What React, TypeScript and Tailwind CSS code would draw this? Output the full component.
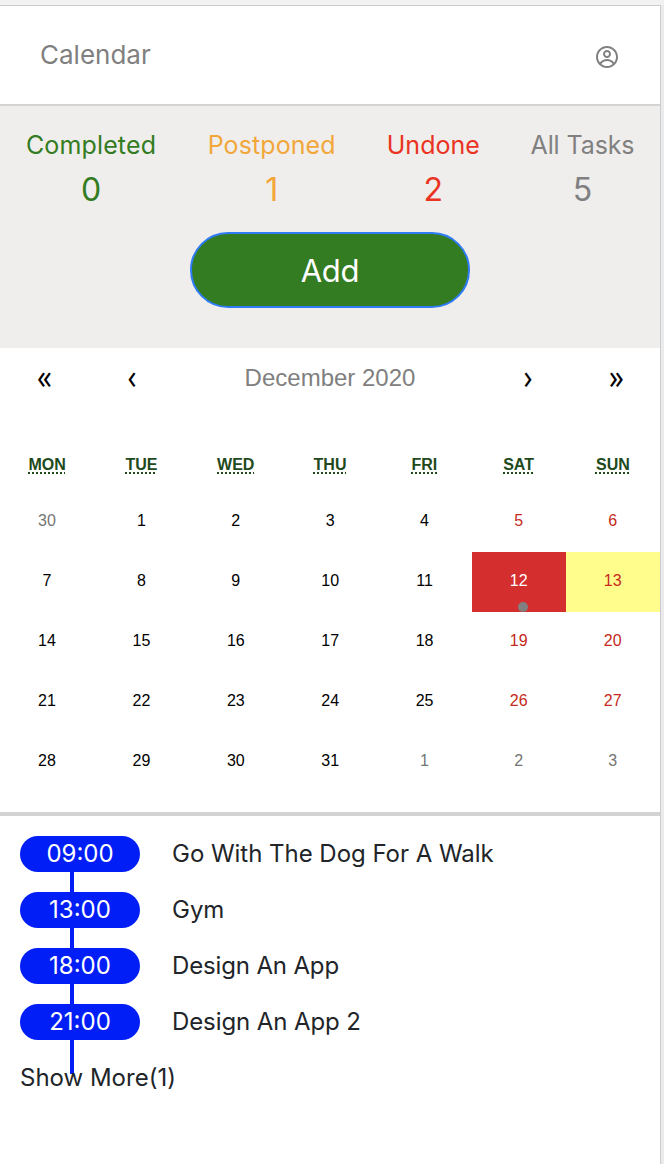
import { CgProfile } from "react-icons/cg";

const stats = [
  { label: "Completed", value: 0, color: "text-[#347c22]", box: "w-[130px]", track: "tracking-[0.15px]" },
  { label: "Postponed", value: 1, color: "text-[#f2a73b]", box: "w-[128px]", track: "tracking-[0.1px]" },
  { label: "Undone", value: 2, color: "text-[#ea3323]", box: "w-[92px]", track: "tracking-[0.05px]" },
  { label: "All Tasks", value: 5, color: "text-[#808080]", box: "w-[103px]", track: "tracking-[-0.1px]" },
];

const weekdays = ["MON", "TUE", "WED", "THU", "FRI", "SAT", "SUN"];

const days = [30, ...Array.from({ length: 31 }, (_, i) => i + 1), 1, 2, 3];

const tasks = [
  { time: "09:00", title: "Go With The Dog For A Walk", track: "tracking-[-0.03px]" },
  { time: "13:00", title: "Gym", track: "tracking-[-0.03px]" },
  { time: "18:00", title: "Design An App", track: "tracking-[-0.15px]" },
  { time: "21:00", title: "Design An App 2", track: "tracking-[-0.1px]" },
];

function dayClass(index: number) {
  if (index === 12) return "bg-[#d52e2e] text-white";
  if (index === 13) return "bg-[#fffd8c] text-[#c52a20]";
  if (index === 0 || index > 31) return "text-[#757575]";
  if (index % 7 >= 5) return "text-[#c52a20]";
  return "text-black";
}

function Header() {
  return (
    <header className="flex h-[100px] items-center justify-between border-b-2 border-[#d3d3d3] pr-[41px] pl-10">
      <h1 className="mb-0.5 text-[26px] leading-[39px] font-normal text-[#808080]">Calendar</h1>
      <CgProfile className="mt-[3px] size-6 text-[#808080]" />
    </header>
  );
}

function Summary() {
  return (
    <section className="h-[242px] bg-[#efeeec] pt-5">
      <div className="flex justify-between px-[26px]">
        {stats.map((s) => (
          <div key={s.label} className={`flex flex-col items-center whitespace-nowrap ${s.color} ${s.box}`}>
            <span className={`text-[25px] leading-[39px] ${s.track}`}>{s.label}</span>
            <span className="text-[32px] leading-[50px]">{s.value}</span>
          </div>
        ))}
      </div>
      <button className="mx-auto mt-[17px] flex h-[76px] w-[280px] items-center justify-center rounded-full border-2 border-[#2f7cf6] bg-[#347c22] pt-0.5 text-[31px] tracking-[-0.3px] text-white">
        Add
      </button>
    </section>
  );
}

function NavButton({ label }: { label: string }) {
  return (
    <button className="w-[88px] pb-1">
      <span className="inline-block scale-x-[1.15] scale-y-[1.35] font-['Open_Sans',sans-serif] text-[26px] font-medium">
        {label}
      </span>
    </button>
  );
}

function Calendar() {
  return (
    <section className="h-[468px] border-b-4 border-[#d3d3d3] font-['Liberation_Sans',Arial,sans-serif]">
      <nav className="flex h-[60px] items-center text-center text-black">
        <NavButton label="«" />
        <NavButton label="‹" />
        <span className="flex-1 text-[24px] text-[#808080]">December 2020</span>
        <NavButton label="›" />
        <NavButton label="»" />
      </nav>
      <div className="mt-7 grid h-14 grid-cols-7 items-center pt-0.5 text-center text-[16px] font-bold text-[#214a1c]">
        {weekdays.map((d) => (
          <span key={d}>
            <abbr className="underline decoration-dotted decoration-2 underline-offset-2">{d}</abbr>
          </span>
        ))}
      </div>
      <div className="grid grid-cols-[repeat(5,94.4px)_94px_94px] text-[16px]">
        {days.map((d, i) => (
          <button key={i} className={`relative h-[60px] pr-[0.4px] pb-0.5 ${dayClass(i)}`}>
            {d}
            {i === 12 && <span className="absolute bottom-0 left-[46px] size-[10px] rounded-full bg-[#808080]" />}
          </button>
        ))}
      </div>
    </section>
  );
}

function Schedule() {
  return (
    <section className="relative flex flex-col gap-5 px-5 pt-5 text-[24px] leading-9 text-[#212529]">
      <div className="absolute top-14 left-[70px] h-[202px] w-1 bg-[#001ef5]" />
      {tasks.map((t) => (
        <div key={t.time} className="relative flex h-9 items-center gap-8">
          <span className="h-9 w-[120px] rounded-full bg-[#001ef5] text-center text-white">{t.time}</span>
          <span className={t.track}>{t.title}</span>
        </div>
      ))}
      <button className="relative h-9 self-start">Show More(1)</button>
    </section>
  );
}

export default function App() {
  return (
    <div className="h-[1164px] w-[664px] overflow-hidden bg-[#ebebeb] font-[Inter,sans-serif]">
      <div className="h-[5px] bg-[#f2f2f2]" />
      <main className="h-[1159px] w-[661px] border-t border-r border-[#cccdd0] bg-white">
        <Header />
        <Summary />
        <Calendar />
        <Schedule />
      </main>
    </div>
  );
}
